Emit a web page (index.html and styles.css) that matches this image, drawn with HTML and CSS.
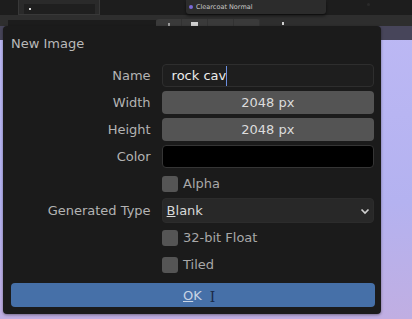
FILE: index.html
```html
<!DOCTYPE html>
<html lang="en">
<head>
    <meta charset="UTF-8">
    <meta name="viewport" content="width=device-width, initial-scale=1.0">
    <title>New Image</title>
    <link rel="stylesheet" href="styles.css">
</head>
<body>

<!-- node editor behind the popup -->
<div class="editor">
    <div class="node-panel">
        <div class="node-slot"><span class="slot-dot"></span></div>
    </div>
    <div class="node">
        <span class="socket"></span>
        <span class="node-label">Clearcoat Normal</span>
    </div>
    <span class="grid-dot"></span>
</div>

<div class="toolbar">
    <div class="tool-field"></div>
    <div class="tool-group">
        <span class="tool-btn"><span class="tool-glyph"></span></span>
        <span class="tool-btn"><span class="tool-glyph wide"></span></span>
        <span class="tool-btn"></span>
        <span class="tool-btn"></span>
    </div>
    <span class="tool-pin"></span>
</div>

<div class="workspace">
    <div class="dialog">
        <div class="dialog-title">New Image</div>

        <div class="form">
            <div class="row">
                <div class="label">Name</div>
                <div class="field text-field">rock cav<span class="caret"></span></div>
            </div>
            <div class="row">
                <div class="label">Width</div>
                <div class="field num-field">2048 px</div>
            </div>
            <div class="row">
                <div class="label">Height</div>
                <div class="field num-field">2048 px</div>
            </div>
            <div class="row">
                <div class="label">Color</div>
                <div class="field color-field"></div>
            </div>
            <div class="row">
                <div class="label"></div>
                <div class="check"><span class="box"></span>Alpha</div>
            </div>
            <div class="row">
                <div class="label">Generated Type</div>
                <div class="field select-field">
                    <span><u>B</u>lank</span>
                    <svg class="chevron" width="10" height="7" viewBox="0 0 10 7">
                        <path d="M1.5 1.5 L5 5 L8.5 1.5" fill="none" stroke="#d0d0d0" stroke-width="1.7"/>
                    </svg>
                </div>
            </div>
            <div class="row">
                <div class="label"></div>
                <div class="check"><span class="box"></span>32-bit Float</div>
            </div>
            <div class="row">
                <div class="label"></div>
                <div class="check"><span class="box"></span>Tiled</div>
            </div>
        </div>

        <button class="ok-btn"><span><u>O</u>K</span><span class="ibeam">I</span></button>
    </div>
</div>

</body>
</html>
```

FILE: styles.css
```css
body {
    margin: 0;
    width: 412px;
    height: 319px;
    overflow: hidden;
    font-family: "DejaVu Sans", sans-serif;
    background-color: #1e1e1e;
}
.editor {
    height: 15px;
    position: relative;
    background-color: #1d1d1d;
}
.node-panel {
    position: absolute;
    left: 18px;
    top: 0;
    width: 82px;
    height: 15px;
    background-color: #2a2a2a;
    border: 1px solid #383838;
    border-top: none;
    box-sizing: border-box;
    padding: 4px 4px 0 5px;
}
.node-slot {
    height: 10px;
    background-color: #1f1f1f;
    padding: 4px 0 0 5px;
    box-sizing: border-box;
}
.slot-dot {
    display: block;
    width: 2px;
    height: 2px;
    background-color: #d8d8d8;
}
.node {
    position: absolute;
    left: 186px;
    top: 0;
    width: 140px;
    height: 14px;
    background-color: #2c2c2c;
    border-radius: 0 0 3px 3px;
    box-shadow: 0 2px 3px rgba(0, 0, 0, 0.5);
    display: flex;
    align-items: center;
    gap: 3px;
    padding-left: 3px;
    box-sizing: border-box;
}
.socket {
    width: 4px;
    height: 4px;
    border-radius: 50%;
    background-color: #7b6ad8;
}
.node-label {
    font-size: 6.5px;
    color: #c8c8c8;
}
.grid-dot {
    position: absolute;
    left: 367px;
    top: 3px;
    width: 3px;
    height: 3px;
    border-radius: 50%;
    background-color: #2a2a2a;
}
.toolbar {
    height: 11px;
    background-color: #2e2e2e;
    display: flex;
    align-items: flex-end;
}
.tool-field {
    width: 148px;
    height: 6px;
    margin-left: 8px;
    background-color: #1c1c1c;
}
.tool-group {
    display: flex;
    height: 7px;
    background-color: #3a3a3a;
    border-radius: 3px 3px 0 0;
}
.tool-btn {
    width: 25px;
    border-right: 1px solid #323232;
    display: flex;
    justify-content: center;
    align-items: flex-end;
}
.tool-glyph {
    width: 2px;
    height: 3px;
    background-color: #9a9a9a;
}
.tool-glyph.wide {
    width: 7px;
    height: 4px;
    background-color: #d0d0d0;
}
.tool-pin {
    width: 2px;
    height: 3px;
    margin-left: 22px;
    margin-bottom: 1px;
    background-color: #cfcfcf;
}
.workspace {
    height: 293px;
    display: flex;
    padding-left: 3px;
    background:
        linear-gradient(to bottom, #47455a 0, #47455a 14px, transparent 14px),
        linear-gradient(to bottom, #bcb8f4 0%, #b4b2f0 60%, #c0aee2 100%);
}
.dialog {
    width: 378px;
    height: 288px;
    background-color: #1b1b1b;
    border-radius: 4px;
    box-shadow: 0 1px 3px rgba(0, 0, 0, 0.4);
    padding: 10px 7px 0 8px;
    box-sizing: border-box;
    display: flex;
    flex-direction: column;
}
.dialog-title {
    font-size: 13px;
    color: #b9b9b9;
    height: 19px;
}
.form {
    display: flex;
    flex-direction: column;
    gap: 4px;
    margin-top: 9px;
}
.row {
    display: flex;
    align-items: center;
    gap: 11px;
    height: 23px;
}
.label {
    width: 140px;
    text-align: right;
    font-size: 13px;
    color: #b3b3b3;
}
.field {
    width: 213px;
    height: 23px;
    border-radius: 4px;
    box-sizing: border-box;
    font-size: 13px;
}
.text-field {
    background-color: #1e1e1e;
    border: 1px solid #2e2e2e;
    color: #ececec;
    padding-left: 9px;
    display: flex;
    align-items: center;
}
.caret {
    display: inline-block;
    width: 1px;
    height: 20px;
    background-color: #6a8ee0;
}
.num-field {
    background-color: #545454;
    color: #dcdcdc;
    display: flex;
    align-items: center;
    justify-content: center;
}
.color-field {
    background-color: #000000;
    border: 1px solid #353535;
}
.check {
    display: flex;
    align-items: center;
    gap: 5px;
    font-size: 13px;
    color: #a8a8a8;
}
.box {
    width: 16px;
    height: 16px;
    border-radius: 3px;
    background-color: #555555;
}
.select-field {
    background-color: #282828;
    border: 1px solid #2c2c2c;
    color: #d8d8d8;
    display: flex;
    align-items: center;
    justify-content: space-between;
    padding: 0 3px 0 4px;
    height: 25px;
}
.chevron {
    margin-top: 1px;
}
.ok-btn {
    margin-top: 7px;
    width: 364px;
    height: 24px;
    background-color: #4670a8;
    border: none;
    border-radius: 4px;
    color: #c8d4e4;
    font-family: "DejaVu Sans", sans-serif;
    font-size: 13px;
    display: flex;
    align-items: center;
    padding-left: 172px;
    gap: 8px;
}
.ibeam {
    font-family: "DejaVu Serif", serif;
    font-size: 14px;
    color: #1a2a48;
    margin-top: 4px;
}
```
